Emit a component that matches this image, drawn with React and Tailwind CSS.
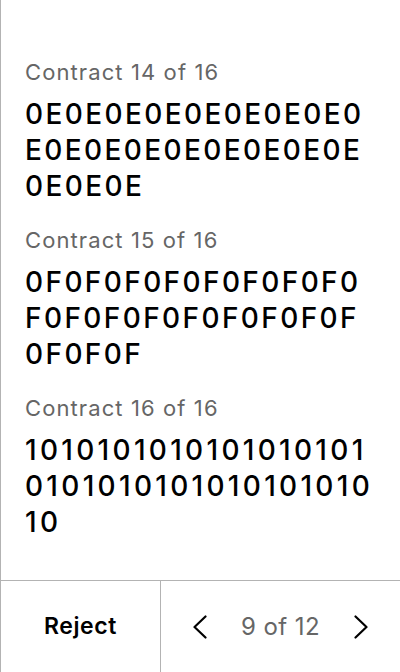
import React from "react";

// tracking per Zeile: die "1" ist in Inter schmaler als im Original
const contracts = [
  { n: 14, data: "0E".repeat(20), track: "tracking-[2.4px]" },
  { n: 15, data: "0F".repeat(20), track: "tracking-[2.4px]" },
  { n: 16, data: "10".repeat(20), track: "tracking-[3.3px]" },
];

function Chevron({ dir = "left" }) {
  return (
    <svg width="14" height="24" viewBox="0 0 14 24" fill="none" stroke="currentColor" strokeWidth="2.2" strokeLinecap="round" strokeLinejoin="round">
      {dir === "left" ? <polyline points="12.5,1.5 1.5,12 12.5,22.5" /> : <polyline points="1.5,1.5 12.5,12 1.5,22.5" />}
    </svg>
  );
}

export default function App() {
  return (
    <div className="h-[672px] w-[400px] flex flex-col bg-white border-l border-[#b3b3b3] overflow-hidden" style={{ fontFamily: "Inter, 'Noto Sans', sans-serif" }}>
      {/* Liste der Verträge */}
      <div className="flex-1 overflow-hidden pl-6 pr-6 pt-[58px] flex flex-col gap-[22px]">
        {contracts.map((c) => (
          <div key={c.n}>
            <p className="text-[22px] leading-[28px] tracking-[1.1px] text-[#666666] mb-[10px]">
              Contract {c.n} of 16
            </p>
            <p className={`text-[28px] leading-[36px] font-medium text-black break-all ${c.track}`}>
              {c.data}
            </p>
          </div>
        ))}
      </div>

      {/* Untere Leiste */}
      <div className="h-[92px] shrink-0 border-t border-[#b3b3b3] flex">
        <button className="w-[160px] border-r border-[#b3b3b3] text-[23px] tracking-[0.6px] font-semibold text-black">
          Reject
        </button>
        <div className="flex-1 flex items-center justify-center gap-[34px] text-black">
          <Chevron dir="left" />
          <span className="text-[24px] tracking-[0.4px] text-[#666666]">9 of 12</span>
          <Chevron dir="right" />
        </div>
      </div>
    </div>
  );
}
